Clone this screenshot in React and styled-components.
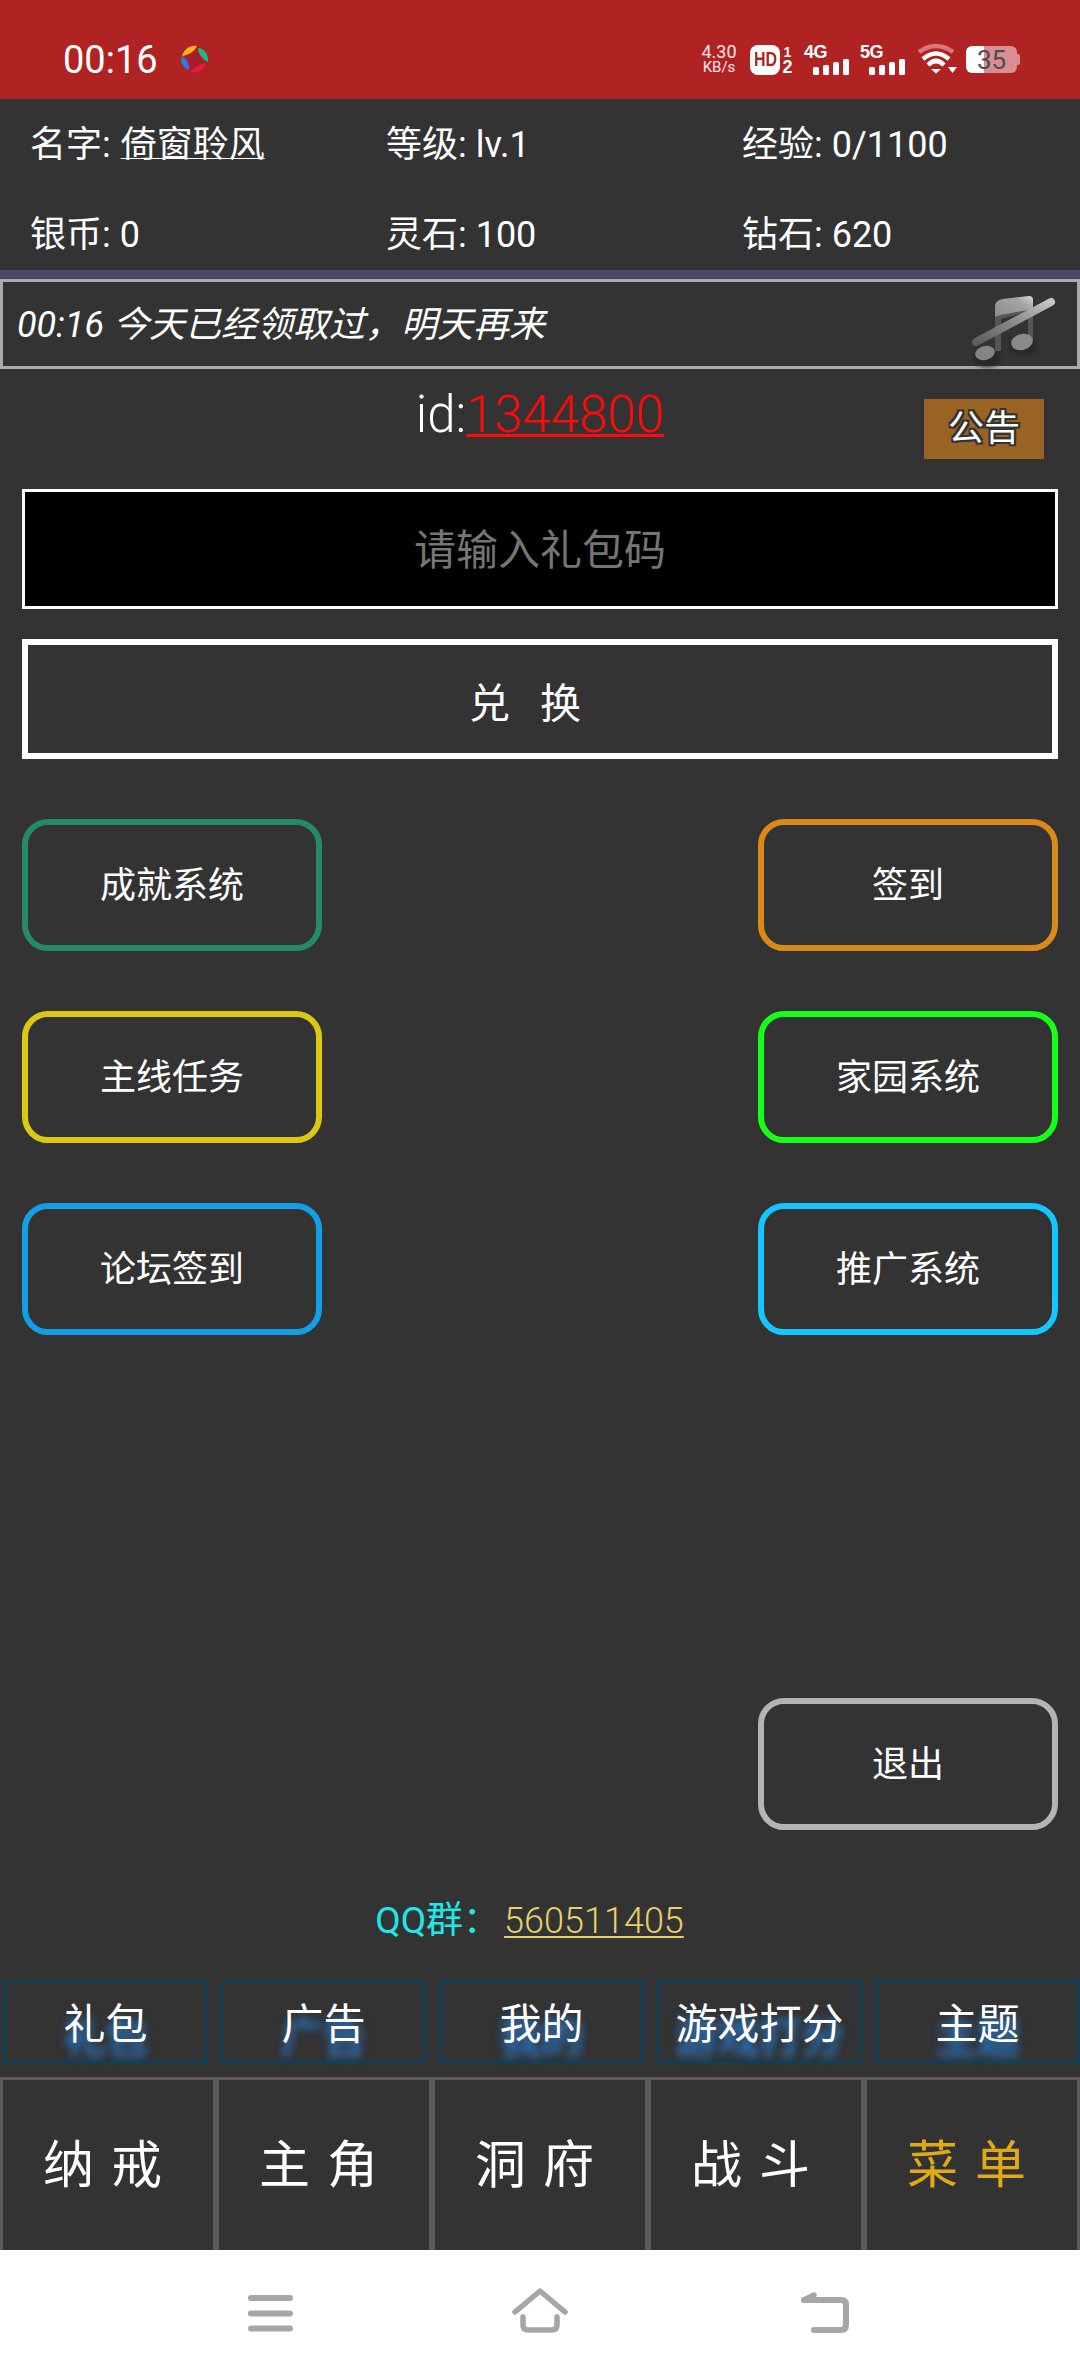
import React from "react";
import styled, { createGlobalStyle } from "styled-components";

const Global = createGlobalStyle`
  html, body { margin: 0; padding: 0; background: #fff; }
  * { box-sizing: border-box; }
`;
const Page = styled.div`
  width: 1080px; height: 2376px; overflow: hidden; display: flex; flex-direction: column;
  background: #333333; color: #fff;
  font-family: Roboto, "Noto Sans CJK SC", sans-serif; font-weight: 400;
`;
const StatusBar = styled.header`
  height: 99px; background: #b12222; display: flex; align-items: center; padding: 20px 63px 0 63px; flex: none;
`;
const Clock = styled.span`font-size: 38px; font-weight: 400; line-height: 40px;`;
const StatusRight = styled.div`margin-left: auto; display: flex; align-items: center; height: 40px;`;
const Speed = styled.div`
  width: 40px; margin-right: 11px; display: flex; flex-direction: column; align-items: center; color: #fbe9e9;
  font-size: 18px; padding-bottom: 2px; white-space: nowrap;
  & span { display: block; line-height: 17px; height: 17px; }
  & small { display: block; font-size: 15px; line-height: 15px; height: 15px; }
`;
const Hd = styled.div`
  width: 30px; height: 30px; border-radius: 8px; background: #fff; color: #b12222; font-size: 20px; font-weight: 700;
  display: flex; align-items: center; justify-content: center; font-family: "Liberation Sans", sans-serif;
  & span { display: block; transform: scaleX(0.8); }
`;
const HdSims = styled.div`
  width: 9px; margin: 0 12px 0 3px; display: flex; flex-direction: column; align-items: center; font-size: 14px; line-height: 15px; font-weight: 700;
  font-family: "Liberation Sans", sans-serif;
  & b:last-child { font-size: 18px; }
`;
const Net = styled.div`
  position: relative; width: 46px; height: 30px; margin-right: ${p => p.$mr}px; flex: none;
  & span { position: absolute; left: 0; top: -2px; font-size: 18px; line-height: 18px; font-weight: 700; font-family: "Liberation Sans", sans-serif; letter-spacing: -0.5px; }
`;
const Bars = styled.div`position: absolute; right: 1px; bottom: 0; display: flex; align-items: flex-end; gap: 4px;`;
const Bar = styled.i`display: block; width: 6px; height: ${p => p.$h}px; background: #fff; border-radius: 1.5px;`;
const Battery = styled.div`
  position: relative; margin-left: 9px; width: 51px; height: 27px; display: flex; align-items: center; justify-content: center;
  border-radius: 6px; background: linear-gradient(90deg, #fff 0 35%, #d98f92 35% 100%); color: #4c4c52; font-size: 26px; font-weight: 400;
  &::after { content: ""; position: absolute; right: -3px; top: 8px; width: 3px; height: 11px; background: #d98f92; border-radius: 0 2px 2px 0; }
`;
const InfoGrid = styled.section`
  flex: none; display: grid; grid-template-columns: 356px 356px 1fr; row-gap: 50px; padding: 26px 0 15px 30px; font-size: 36px; line-height: 40px;
`;
const Name = styled.span`margin-left: 1px; text-decoration: underline; text-underline-offset: 1px; text-decoration-thickness: 1px;`;
const Divider = styled.div`height: 9px; background: #4a4a68; flex: none;`;
const Notice = styled.div`
  height: 90px; flex: none; border: 3px solid #aaaaaa; display: flex; align-items: center; padding: 0 0 6px 14px; position: relative; font-style: italic; font-size: 36px;
`;
const MusicIcon = styled.svg`position: absolute; right: 19px; top: 13px;`;
const IdRow = styled.div`
  flex: none; margin-top: 30px; height: 60px; display: grid; grid-template-columns: 1fr auto 1fr; align-items: start; font-size: 51px; line-height: 42px; font-weight: 300;
`;
const IdText = styled.div`grid-column: 2; margin-top: -5px;`;
const IdNum = styled.span`color: #ff0a0a; text-decoration: underline; text-decoration-thickness: 3px; text-underline-offset: 2px;`;
const Announce = styled.div`
  grid-column: 3; justify-self: end; margin-right: 36px; width: 120px; height: 60px; background: #9a6324; display: flex; align-items: center; justify-content: center;
  font-size: 36px; font-weight: 400; line-height: 60px; text-shadow: -2px 0 #333, 2px 0 #333, 0 -2px #333, 0 2px #333, -2px -2px #333, 2px 2px #333, 2px -2px #333, -2px 2px #333;
`;
const CodeInput = styled.div`
  flex: none; margin: 30px 22px 0; height: 120px; background: #000; border: 3px solid #fff; display: flex; align-items: center; justify-content: center;
  font-size: 42px; color: #757575; padding-bottom: 6px;
`;
const Redeem = styled.div`
  flex: none; margin: 30px 22px 0; height: 120px; border: 6px solid #fff; display: flex; align-items: center; justify-content: center; font-size: 41px; letter-spacing: 30px; padding-top: 2px;
`;
const ActionGrid = styled.div`
  flex: none; margin: 60px 22px 0; display: grid; grid-template-columns: 300px 300px; justify-content: space-between; row-gap: 60px;
`;
const Action = styled.div`
  height: 132px; width: 300px; border: 6px solid ${p => p.$c}; border-radius: 26px; display: flex; align-items: center; justify-content: center; font-size: 36px; padding-bottom: 6px;
`;
const ExitRow = styled.div`flex: none; margin: 363px 22px 0; display: flex; justify-content: flex-end;`;
const QQ = styled.div`
  flex: none; margin-top: 69px; height: 40px; display: flex; justify-content: center; font-size: 37px; line-height: 44px; color: #1fe8e8; padding-right: 21px;
`;
const QQNum = styled.span`color: #e6d06c; margin-left: 4px; font-size: 36px; font-weight: 300; text-decoration: underline; text-decoration-thickness: 2px; text-underline-offset: 3px;`;
const Tabs = styled.nav`flex: none; margin-top: 41px; padding-left: 3px; display: flex; gap: 13px;`;
const Tab = styled.div`
  width: 205px; height: 84px; border: 3px solid #123f57; display: flex; align-items: center; justify-content: center; font-size: 42px; padding-bottom: 3px;
  text-shadow: 0 13px 8px #2a6db0, 0 14px 9px #2a6db0;
`;
const BottomNav = styled.nav`flex: none; margin-top: 13px; height: 173px; display: grid; grid-template-columns: repeat(5, 216px);`;
const NavCell = styled.div`
  border: 3px solid #5e5a5c; border-bottom: none; display: flex; align-items: center; justify-content: center; font-size: 51px; letter-spacing: 17px; padding: 0 0 8px 6px;
  color: ${p => p.$c || "#fff"};
`;
const SoftKeys = styled.footer`
  flex: 1; background: #fff; display: grid; grid-template-columns: 263px 290px 48px; padding: 38px 0 0 248px; align-items: start;
`;
const Icon = styled.svg`display: block;`;
const Logo = styled.svg`display: block; margin: -2px 0 0 21px;`;
const Wifi = styled.svg`display: block; margin-bottom: 2px;`;
const MenuGlyph = styled.svg`display: block; margin-top: 7px;`;

const actions = [
  ["成就系统", "#248b66"], ["签到", "#d98a18"],
  ["主线任务", "#dcc813"], ["家园系统", "#16ff16"],
  ["论坛签到", "#119fe8"], ["推广系统", "#14c6ff"],
];

export default function App() {
  return (
    <Page>
      <Global />
      <StatusBar>
        <Clock>00:16</Clock>
        <Logo width="30" height="30" viewBox="0 0 30 30">
          <circle cx="15" cy="15" r="13" fill="#a81c2a" />
          <path d="M3 12C5 5 11 1 18 2 16 7 10 11 3 12z" fill="#f5b90f" />
          <path d="M19 4C25 4 30 11 29 18 24 16 19 10 19 4z" fill="#1db883" />
          <path d="M27 19C26 25 19 30 11 28 15 23 21 20 27 19z" fill="#e8174a" />
          <path d="M3 12C7 14 11 20 10 26 4 24 0 18 3 12z" fill="#2a7be0" />
        </Logo>
        <StatusRight>
          <Speed><span>4.30</span><small>KB/s</small></Speed>
          <Hd><span>HD</span></Hd>
          <HdSims><b>1</b><b>2</b></HdSims>
          <Net $mr={10}><span>4G</span><Bars><Bar $h={8} /><Bar $h={10} /><Bar $h={13} /><Bar $h={16} /></Bars></Net>
          <Net $mr={11}><span>5G</span><Bars><Bar $h={8} /><Bar $h={10} /><Bar $h={13} /><Bar $h={16} /></Bars></Net>
          <Wifi width="40" height="32" viewBox="0 0 40 32">
            <path d="M2 9Q19-3 36 9" fill="none" stroke="#d6797b" strokeWidth="4.500" />
            <path d="M6 16Q19 5 32 16" fill="none" stroke="#fff" strokeWidth="4.500" />
            <path d="M11 22Q19 14 27 22" fill="none" stroke="#fff" strokeWidth="4.500" />
            <path d="M14 26h10l-5 4.500z" fill="#fff" />
            <path d="M31 24h9l-4.500 6z" fill="#fff" />
          </Wifi>
          <Battery>35</Battery>
        </StatusRight>
      </StatusBar>

      <InfoGrid>
        <div>名字: <Name>倚窗聆风</Name></div>
        <div>等级: lv.1</div>
        <div>经验: 0/1100</div>
        <div>银币: 0</div>
        <div>灵石: 100</div>
        <div>钻石: 620</div>
      </InfoGrid>
      <Divider />
      <Notice>
        00:16 今天已经领取过，明天再来
        <MusicIcon width="90" height="76" viewBox="0 0 90 76">
          <defs>
            <linearGradient id="beam" x1="0" y1="1" x2="1" y2="0">
              <stop offset="0" stopColor="#8a8a8a" />
              <stop offset="0.7" stopColor="#a5a5a5" />
              <stop offset="1" stopColor="#dadada" />
            </linearGradient>
            <linearGradient id="slash" x1="0" y1="1" x2="1" y2="0">
              <stop offset="0" stopColor="#5e5e5e" />
              <stop offset="0.5" stopColor="#8a8a8a" />
              <stop offset="1" stopColor="#c4c4c4" />
            </linearGradient>
            <filter id="soft"><feGaussianBlur stdDeviation="2" /></filter>
          </defs>
          <ellipse cx="19" cy="63" rx="14" ry="9" fill="#262626" filter="url(#soft)" />
          <ellipse cx="55" cy="51" rx="14" ry="9" fill="#262626" filter="url(#soft)" />
          <path d="M27 56V12q0-7 8-8l26-3q4 0 4 4v41h-5V17L33 24v32z" fill="#565656" />
          <path d="M27 22V12q0-7 8-8l26-3q4 0 4 4v9L33 20z" fill="url(#beam)" />
          <ellipse cx="17" cy="58" rx="10" ry="7" fill="#858585" transform="rotate(-15 17 58)" />
          <ellipse cx="54" cy="47" rx="11" ry="8" fill="#8a8a8a" transform="rotate(-15 54 47)" />
          <path d="M8 47 83 7" stroke="url(#slash)" strokeWidth="8" strokeLinecap="round" />
        </MusicIcon>
      </Notice>
      <IdRow>
        <IdText>id:<IdNum>1344800</IdNum></IdText>
        <Announce>公告</Announce>
      </IdRow>
      <CodeInput>请输入礼包码</CodeInput>
      <Redeem>兑换</Redeem>
      <ActionGrid>
        {actions.map(([t, c]) => <Action key={t} $c={c}>{t}</Action>)}
      </ActionGrid>
      <ExitRow><Action $c="#b4b4b4">退出</Action></ExitRow>
      <QQ>QQ群： <QQNum>560511405</QQNum></QQ>
      <Tabs>
        {["礼包", "广告", "我的", "游戏打分", "主题"].map(t => <Tab key={t}>{t}</Tab>)}
      </Tabs>
      <BottomNav>
        <NavCell>纳戒</NavCell>
        <NavCell>主角</NavCell>
        <NavCell>洞府</NavCell>
        <NavCell>战斗</NavCell>
        <NavCell $c="#e0aa17">菜单</NavCell>
      </BottomNav>
      <SoftKeys>
        <MenuGlyph width="45" height="38" viewBox="0 0 45 38">
          <path d="M3 3h39M3 18.500h39M3 33.500h39" stroke="#a6a6a6" strokeWidth="6" strokeLinecap="round" />
        </MenuGlyph>
        <Icon width="58" height="46" viewBox="0 0 58 46">
          <path d="M4 24 29 3l25 21" fill="none" stroke="#a6a6a6" strokeWidth="5.500" strokeLinecap="round" strokeLinejoin="round" />
          <path d="M12 29v8q0 5 5 5H41q5 0 5-5v-8" fill="none" stroke="#a6a6a6" strokeWidth="5.500" strokeLinecap="round" />
        </Icon>
        <Icon width="48" height="46" viewBox="0 0 48 46">
          <path d="M3 12 13 7" fill="none" stroke="#a6a6a6" strokeWidth="5.500" strokeLinecap="round" />
          <path d="M3 12H40q5 0 5 5V37q0 5-5 5H13" fill="none" stroke="#a6a6a6" strokeWidth="6" strokeLinecap="round" strokeLinejoin="round" />
        </Icon>
      </SoftKeys>
    </Page>
  );
}
